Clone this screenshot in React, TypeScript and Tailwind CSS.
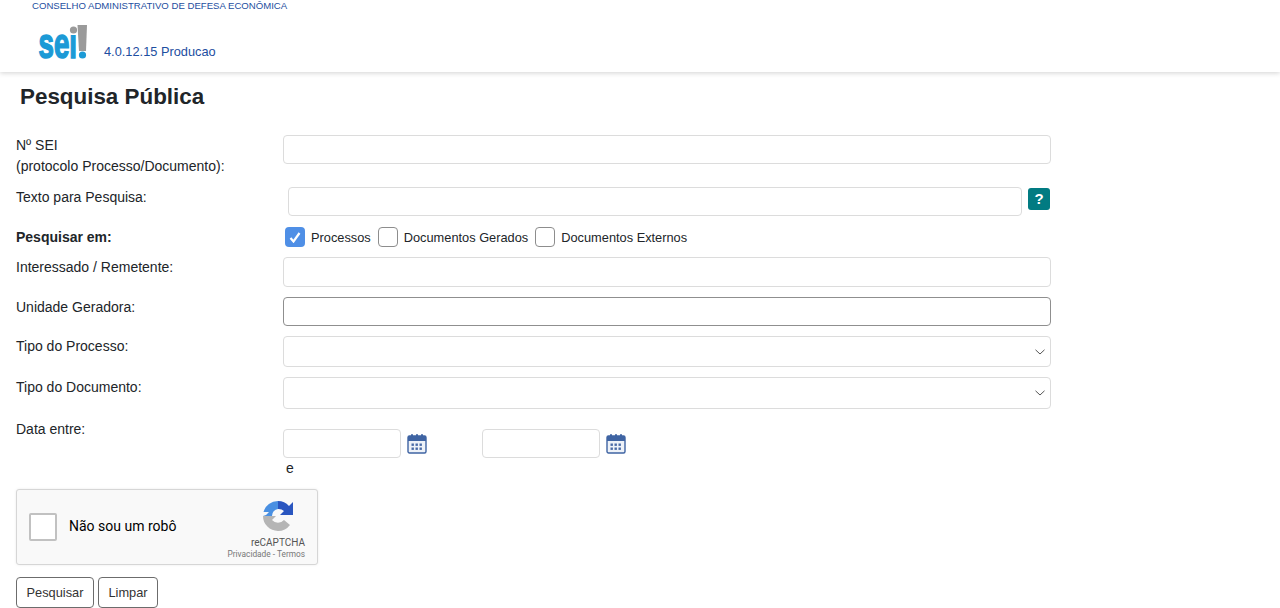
const inputCls = 'block h-[29px] rounded-[4px] border border-[#dcdcdc] bg-white';
const labelCls = 'w-[267px] shrink-0 text-[14px] leading-[21px] text-[#212529]';

const CalendarIcon = () => (
  <svg width="20" height="21" viewBox="0 0 20 21" className="shrink-0">
    <rect x="1" y="3" width="18" height="17" rx="1.5" fill="#eef2f8" stroke="#3f64a3" strokeWidth="1.4" />
    <rect x="1" y="3" width="18" height="5" fill="#3f64a3" />
    <rect x="4" y="1" width="2" height="4" rx="1" fill="#3f64a3" />
    <rect x="9" y="1" width="2" height="4" rx="1" fill="#3f64a3" />
    <rect x="14" y="1" width="2" height="4" rx="1" fill="#3f64a3" />
    {[10.5, 14.5].map((y) =>
      [4.5, 8.5, 12.5].map((x) => <rect key={`${x}-${y}`} x={x} y={y} width="2.4" height="2.4" fill="#4a6ba6" />)
    )}
  </svg>
);

const Chevron = () => (
  <svg width="10" height="6" viewBox="0 0 10 6" className="absolute right-[5px] top-1/2 -translate-y-1/2">
    <path d="M0.5 0.8 L5 5 L9.5 0.8" fill="none" stroke="#555" strokeWidth="1" />
  </svg>
);

// letters are live text squeezed sideways, the grey dot and exclamation mark are drawn over them
const Logo = () => (
  <svg width="52" height="50" viewBox="0 0 52 50" className="shrink-0">
    <text transform="translate(1.5 40.5) scale(0.66 1)" fontFamily="'Liberation Sans', sans-serif" fontWeight="700" fontSize="42" fill="#1c9ad6" stroke="#1c9ad6" strokeWidth="1.6">sei</text>
    <rect x="31" y="6" width="10" height="12" fill="#fff" />
    <circle cx="36.5" cy="13" r="3.6" fill="#9a9a9a" />
    <path d="M40.5 8 H50 L49 34 H42 Z" fill="#9a9a9a" />
    <circle cx="45.5" cy="38" r="3.6" fill="#1c9ad6" />
  </svg>
);

const RecaptchaIcon = () => (
  <svg width="32" height="32" viewBox="0 0 32 32">
    <path d="M16 1 A15 15 0 0 0 1.5 12 L7 12 L4 15 L1 16 L10 16 A7 7 0 0 1 16 9 Z" fill="#4a90e2" />
    <path d="M16 1 A15 15 0 0 1 27 6 L31 2 L31 15 L18 15 L22 11 A8 8 0 0 0 16 9 Z" fill="#2a56c0" />
    <path d="M1 16 L1 16 A15 15 0 0 0 16 31 A15 15 0 0 0 28 25 L22 20 A8 8 0 0 1 10 20 L14 16 Z" fill="#b5b5b5" />
  </svg>
);

export default function App() {
  return (
    <div className="h-[608px] overflow-hidden bg-white font-['Liberation_Sans',Arial,sans-serif]">
      <header className="h-[72px] bg-white shadow-[0_1px_5px_rgba(0,0,0,0.18)]">
        <p className="pl-8 text-[9.6px] leading-[11px] text-[#1d4ea0]">CONSELHO ADMINISTRATIVO DE DEFESA ECONÔMICA</p>
        <div className="mt-[6px] flex items-start pl-[37px]">
          <Logo />
          <span className="ml-[15px] mt-[27px] text-[12.8px] leading-[16px] text-[#1d4ea0]">4.0.12.15 Producao</span>
        </div>
      </header>

      <main className="pl-4">
        <h1 className="ml-1 mt-[12px] text-[22.4px] font-bold leading-[26px] text-[#212529]">Pesquisa Pública</h1>

        <div className="mt-[25px] flex">
          <label className={labelCls}>
            Nº SEI
            <br />
            (protocolo Processo/Documento):
          </label>
          <input className={`${inputCls} w-[768px]`} />
        </div>

        <div className="mt-[10px] flex">
          <label className={labelCls}>Texto para Pesquisa:</label>
          <input className={`${inputCls} ml-[5px] w-[734px]`} />
          <span className="ml-[6px] mt-px flex h-[22px] w-[22px] items-center justify-center rounded-[3px] bg-[#017b82] text-[15px] font-bold text-white">?</span>
        </div>

        <div className="mt-[11px] flex h-[20px] items-center">
          <label className={`${labelCls} font-bold`}>Pesquisar em:</label>
          <div className="ml-[2px] flex items-center text-[12.8px] text-[#212529]">
            <span className="flex h-5 w-5 items-center justify-center rounded-[4px] bg-[#4f8fe6]">
              <svg width="12" height="11" viewBox="0 0 12 11">
                <path d="M1.5 6 L4.5 9.5 L10.5 1" fill="none" stroke="#fff" strokeWidth="2.2" />
              </svg>
            </span>
            <span className="ml-[6px] pt-[2px]">Processos</span>
            <span className="ml-[7px] h-5 w-5 rounded-[4px] border border-[#8d8d8d] bg-white" />
            <span className="ml-[6px] pt-[2px]">Documentos Gerados</span>
            <span className="ml-[7px] h-5 w-5 rounded-[4px] border border-[#8d8d8d] bg-white" />
            <span className="ml-[6px] pt-[2px]">Documentos Externos</span>
          </div>
        </div>

        <div className="mt-[10px] flex">
          <label className={labelCls}>Interessado / Remetente:</label>
          <input className={`${inputCls} h-[30px] w-[768px]`} />
        </div>

        <div className="mt-[10px] flex">
          <label className={labelCls}>Unidade Geradora:</label>
          <input className="block h-[29px] w-[768px] rounded-[4px] border border-[#8f8f8f] bg-white" />
        </div>

        <div className="mt-[10px] flex">
          <label className={labelCls}>Tipo do Processo:</label>
          <div className="relative h-[31px] w-[768px] rounded-[4px] border border-[#dcdcdc] bg-white">
            <Chevron />
          </div>
        </div>

        <div className="mt-[10px] flex">
          <label className={labelCls}>Tipo do Documento:</label>
          <div className="relative h-[32px] w-[768px] rounded-[4px] border border-[#dcdcdc] bg-white">
            <Chevron />
          </div>
        </div>

        <div className="mt-[10px] flex">
          <label className={labelCls}>Data entre:</label>
          <div className="pt-[10px]">
            <div className="flex items-center">
              <input className={`${inputCls} w-[118px]`} />
              <span className="ml-[6px]">
                <CalendarIcon />
              </span>
              <input className={`${inputCls} ml-[55px] w-[118px]`} />
              <span className="ml-[6px]">
                <CalendarIcon />
              </span>
            </div>
            <p className="ml-[3px] mt-[2px] text-[14px] leading-[17px] text-[#212529]">e</p>
          </div>
        </div>

        <div className="mt-[12px] flex h-[76px] w-[302px] items-center rounded-[3px] border border-[#d6d6d6] bg-[#f9f9f9] shadow-[0_0_3px_rgba(0,0,0,0.08)]">
          <span className="ml-[12px] h-[28px] w-[28px] rounded-[2px] border-2 border-[#c1c1c1] bg-white" />
          <span className="mb-[2px] ml-[12px] flex-1 text-[14px] text-black font-['Roboto',sans-serif]">Não sou um robô</span>
          <div className="mr-[12px] flex flex-col items-end pt-[4px] font-['Roboto',sans-serif] text-[#555]">
            <span className="mr-[11px]">
              <RecaptchaIcon />
            </span>
            <span className="mt-[5px] text-[10px] leading-[12px]">reCAPTCHA</span>
            <span className="text-[8.3px] leading-[10px] text-[#777]">Privacidade - Termos</span>
          </div>
        </div>

        <div className="mt-[12px] flex gap-1">
          <button className="h-[31px] w-[78px] rounded-[4px] border border-[#6c6c6c] bg-white text-[12.8px] text-[#333]">Pesquisar</button>
          <button className="h-[31px] w-[60px] rounded-[4px] border border-[#6c6c6c] bg-white text-[12.8px] text-[#333]">Limpar</button>
        </div>
      </main>
    </div>
  );
}
